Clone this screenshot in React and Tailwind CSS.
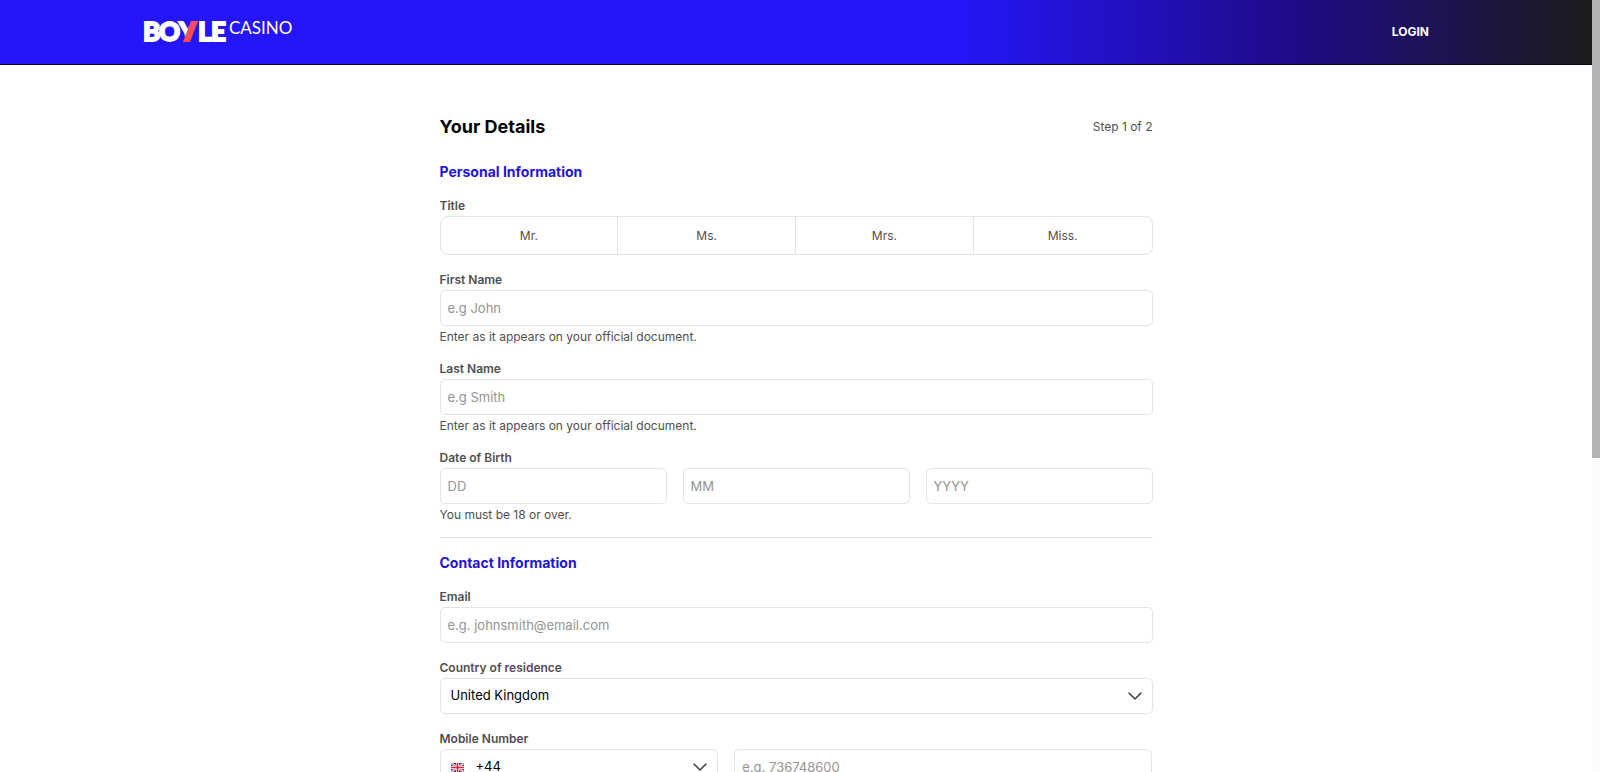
import React from 'react';

const titles = ['Mr.', 'Ms.', 'Mrs.', 'Miss.'];

const inputClass =
    'h-9 w-full min-w-0 rounded-[5px] border border-[#e4e4e4] bg-white px-[7px] text-[13px] text-black placeholder:text-[#949494]';

const Logo = () => (
    <svg className="h-6 w-40 overflow-visible" viewBox="0 0 160 24" role="img" aria-label="Boyle Casino">
        <text
            x="-1 15 35 54 67"
            y="21"
            fill="#fff"
            stroke="#fff"
            strokeWidth="1.8"
            fontFamily="Lato, sans-serif"
            fontWeight="900"
            fontSize="26"
        >
            BOYLE
        </text>
        {/* the red slash replaces the stem and right arm of the Y */}
        <polygon points="46,0 55,0 54,23 38,23 38,18 43,15" fill="#2416f9" />
        <polygon points="47,1 54,1 46,22 39,22" fill="#ff4b55" />
        <text x="85" y="14" fill="#fff" fontFamily="Lato, sans-serif" fontSize="17">
            CASINO
        </text>
    </svg>
);

const Flag = () => (
    <svg className="h-[9px] w-[13px] shrink-0" viewBox="0 0 26 18" aria-hidden="true">
        <rect width="26" height="18" fill="#2a3f91" />
        <path d="M0 0l26 18M26 0L0 18" stroke="#fff" strokeWidth="4" />
        <path d="M0 0l26 18M26 0L0 18" stroke="#e0263c" strokeWidth="1.4" />
        <path d="M13 0v18M0 9h26" stroke="#fff" strokeWidth="6" />
        <path d="M13 0v18M0 9h26" stroke="#e0263c" strokeWidth="3.4" />
    </svg>
);

const Chevron = () => (
    <svg
        className="pointer-events-none h-2 w-3.5 shrink-0"
        viewBox="0 0 14 8"
        fill="none"
        stroke="#444"
        strokeWidth="1.6"
        strokeLinecap="round"
        strokeLinejoin="round"
        aria-hidden="true"
    >
        <path d="M1 1l6 6 6-6" />
    </svg>
);

const Label = ({ htmlFor, children }) => (
    <label htmlFor={htmlFor} className="mb-0.5 block text-xs leading-[17px] font-semibold text-[#4f4f4f]">
        {children}
    </label>
);

const Hint = ({ children }) => (
    <p className="mt-[3px] text-xs leading-[15px] text-[#4f4f4f]">{children}</p>
);

const SectionTitle = ({ children }) => (
    <h2 className="text-sm leading-[18px] font-bold text-[#2413d8]">{children}</h2>
);

const App = () => {
    return (
        <div
            className="flex h-screen overflow-hidden bg-white"
            style={{ fontFamily: "'Inter', sans-serif" }}
        >
            <div className="min-w-0 flex-1 overflow-hidden">
                <header className="h-[65px] border-b border-[#0b0826] bg-linear-to-r/srgb from-[#2416f9] from-60% via-[#1f0b88] via-81% to-[#1b1b1b]">
                    <div className="mx-auto flex max-w-[1304px] items-center justify-between pt-5">
                        <a href="#home">
                            <Logo />
                        </a>
                        <a href="#login" className="px-[19px] text-xs font-bold text-white">
                            LOGIN
                        </a>
                    </div>
                </header>

                <main className="mx-auto max-w-[713px] pt-12">
                    <div className="flex items-center justify-between">
                        <h1 className="text-lg leading-7 font-bold text-black">Your Details</h1>
                        <span className="text-xs text-[#4f4f4f]">Step 1 of 2</span>
                    </div>

                    <form>
                        <section className="flex flex-col gap-4 border-b border-[#e4e4e4] pt-[22px] pb-[15px]">
                            <SectionTitle>Personal Information</SectionTitle>
                            <fieldset>
                                <legend className="mb-0.5 text-xs leading-[17px] font-semibold text-[#4f4f4f]">
                                    Title
                                </legend>
                                <div className="grid grid-cols-4 divide-x divide-[#e4e4e4] rounded-lg border border-[#e4e4e4]">
                                    {titles.map((title) => (
                                        <label
                                            key={title}
                                            className="relative flex h-[37px] items-center justify-center text-xs text-[#4f4f4f]"
                                        >
                                            <input type="radio" name="title" value={title} className="sr-only" />
                                            {title}
                                        </label>
                                    ))}
                                </div>
                            </fieldset>
                            <div>
                                <Label htmlFor="first-name">First Name</Label>
                                <input id="first-name" type="text" placeholder="e.g John" className={inputClass} />
                                <Hint>Enter as it appears on your official document.</Hint>
                            </div>
                            <div>
                                <Label htmlFor="last-name">Last Name</Label>
                                <input id="last-name" type="text" placeholder="e.g Smith" className={inputClass} />
                                <Hint>Enter as it appears on your official document.</Hint>
                            </div>
                            <div>
                                <Label htmlFor="dob-day">Date of Birth</Label>
                                <div className="grid grid-cols-3 gap-4">
                                    <input id="dob-day" type="text" placeholder="DD" className={inputClass} />
                                    <input type="text" aria-label="Month of birth" placeholder="MM" className={inputClass} />
                                    <input type="text" aria-label="Year of birth" placeholder="YYYY" className={inputClass} />
                                </div>
                                <Hint>You must be 18 or over.</Hint>
                            </div>
                        </section>

                        <section className="flex flex-col gap-4 pt-4 pb-4">
                            <SectionTitle>Contact Information</SectionTitle>
                            <div>
                                <Label htmlFor="email">Email</Label>
                                <input id="email" type="email" placeholder="e.g. johnsmith@email.com" className={inputClass} />
                            </div>
                            <div>
                                <Label htmlFor="country">Country of residence</Label>
                                <div className="flex h-9 items-center rounded-[5px] border border-[#e4e4e4] px-2.5">
                                    <select id="country" className="flex-1 appearance-none text-[13px] text-black">
                                        <option>United Kingdom</option>
                                    </select>
                                    <Chevron />
                                </div>
                            </div>
                            <div>
                                <Label htmlFor="mobile">Mobile Number</Label>
                                <div className="grid grid-cols-[2fr_3fr] gap-4">
                                    <div className="flex h-9 items-center rounded-[5px] border border-[#e4e4e4] px-2.5">
                                        <Flag />
                                        <select aria-label="Country code" className="ml-3 flex-1 appearance-none text-[13px] text-black">
                                            <option>+44</option>
                                        </select>
                                        <Chevron />
                                    </div>
                                    <input id="mobile" type="tel" placeholder="e.g. 736748600" className={inputClass} />
                                </div>
                            </div>
                        </section>
                    </form>
                </main>
            </div>

            <div className="w-2 shrink-0 bg-[#fcfcfc]">
                <div className="h-[458px] bg-[#b4b4b4]"></div>
            </div>
        </div>
    );
};

export default App;
